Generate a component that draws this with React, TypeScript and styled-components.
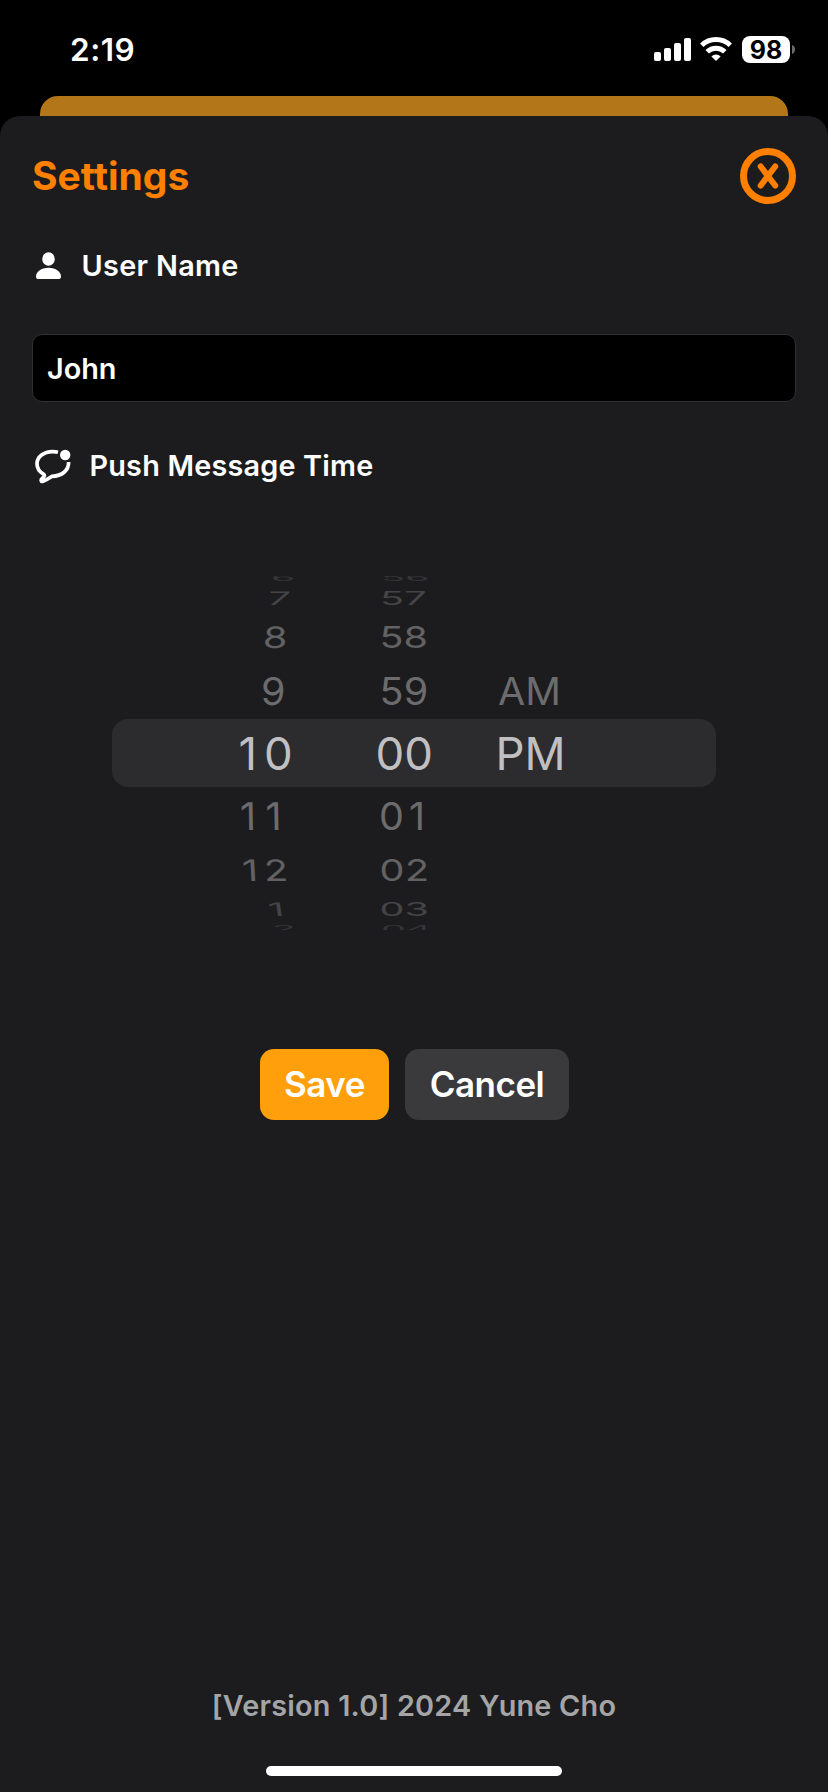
import React from "react";
import styled, { createGlobalStyle } from "styled-components";

const GlobalStyle = createGlobalStyle`
  * { box-sizing: border-box; }
  body { margin: 0; background: #000; font-family: Inter, "Liberation Sans", sans-serif; }
`;

const Screen = styled.div`
  width: 828px;
  height: 1792px;
  display: flex;
  flex-direction: column;
  background: #000;
  overflow: hidden;
`;

const StatusBar = styled.header`
  height: 96px;
  flex: none;
  display: flex;
  justify-content: space-between;
  align-items: flex-start;
  padding: 36px 33px 0 70px;
`;

const Clock = styled.time`
  font-size: 31.5px;
  line-height: 28px;
  font-weight: 600;
  color: #fff;
  letter-spacing: 0.5px;
`;

const StatusIcons = styled.div`
  display: flex;
  align-items: center;
  height: 27px;
`;

const SignalBars = styled.svg`
  width: 37px;
  height: 27px;
`;

const Wifi = styled.svg`
  width: 32px;
  height: 27px;
  margin-left: 9px;
`;

const Battery = styled.div`
  width: 48px;
  height: 27px;
  margin-left: 10px;
  border-radius: 8px;
  background: #fff;
  color: #000;
  font-size: 25px;
  line-height: 28px;
  font-weight: 700;
  text-align: center;
`;

const BatteryTip = styled.svg`
  width: 3px;
  height: 9px;
  margin-left: 2px;
`;

const BackSheet = styled.div`
  height: 20px;
  flex: none;
  margin: 0 40px;
  border-radius: 18px 18px 0 0;
  background: #b37719;
`;

const Sheet = styled.main`
  flex: 1;
  display: flex;
  flex-direction: column;
  border-radius: 20px 20px 0 0;
  background: #1c1c1e;
  padding: 32px 32px 16px;
`;

const TitleRow = styled.div`
  display: flex;
  justify-content: space-between;
  height: 56px;
`;

const Title = styled.h1`
  margin: 0;
  font-size: 39px;
  line-height: 56px;
  font-weight: 700;
  color: #ff8000;
`;

const CloseButton = styled.button`
  width: 56px;
  height: 56px;
  padding: 0;
  border: 0;
  background: none;
`;

const CloseIcon = styled.svg`
  display: block;
  width: 56px;
  height: 56px;
`;

const Label = styled.div<{ $top: number; $gap: number; $tracking: number }>`
  display: flex;
  align-items: center;
  gap: ${(p) => p.$gap}px;
  height: 40px;
  margin-top: ${(p) => p.$top}px;
  padding-left: 3px;
  font-size: 28.8px;
  line-height: 40px;
  font-weight: 600;
  letter-spacing: ${(p) => p.$tracking}px;
  color: #fff;
`;

const NameField = styled.div`
  height: 68px;
  margin-top: 48px;
  padding-left: 14px;
  border: 1px solid #313133;
  border-radius: 10px;
  background: #000;
  color: #fff;
  font-size: 28.8px;
  line-height: 67px;
  font-weight: 600;
`;

const Wheel = styled.div`
  display: grid;
  grid-template-columns: 220px 130px 1fr;
  grid-template-rows: 8px 27px 51px 57px 68px 57px 51px 27px 8px;
  width: 604px;
  margin: 90px auto 0;
`;

const SelectedBand = styled.div`
  grid-area: 5 / 1 / 6 / 4;
  border-radius: 16px;
  background: #2c2c2e;
`;

const Cell = styled.div<{ $row: number; $col: number; $x: number }>`
  grid-area: ${(p) => p.$row} / ${(p) => p.$col};
  display: flex;
  align-items: center;
  padding-left: ${(p) => p.$x}px;
  overflow: ${(p) => (p.$row === 1 || p.$row === 9 ? "hidden" : "visible")};
`;

const Digits = styled.span<{
  $sy: number;
  $size: number;
  $tone: string;
  $skew: number;
  $dy: number;
  $tracking: number;
}>`
  display: block;
  font-size: ${(p) => p.$size}px;
  line-height: 40px;
  letter-spacing: ${(p) => p.$tracking}px;
  color: ${(p) => p.$tone};
  white-space: nowrap;
  transform: translateY(${(p) => p.$dy}px) skewX(${(p) => p.$skew}deg) scaleY(${(p) => p.$sy});
`;

const Actions = styled.div`
  display: flex;
  justify-content: center;
  gap: 16px;
  margin-top: 119px;
  padding-left: 1px;
`;

const ActionButton = styled.button<{ $primary?: boolean }>`
  width: ${(p) => (p.$primary ? 129 : 164)}px;
  height: 71px;
  padding: 0;
  border: 0;
  border-radius: 14px;
  background: ${(p) => (p.$primary ? "#ff9f0c" : "#3a3a3d")};
  color: #fff;
  font-family: inherit;
  font-size: 35px;
  line-height: 71px;
  font-weight: 600;
  letter-spacing: -0.5px;
`;

const Version = styled.footer`
  margin-top: auto;
  margin-bottom: 40px;
  line-height: 40px;
  font-size: 28.8px;
  font-weight: 600;
  letter-spacing: 0.24px;
  text-align: center;
  color: #a5a5a7;
`;

const HomeIndicator = styled.div`
  width: 296px;
  height: 10px;
  flex: none;
  align-self: center;
  border-radius: 5px;
  background: #fff;
`;

// Appearance of a wheel row by its distance from the selected one.
const tiers = [
  { size: 45.5, sy: 1, tone: "#c0c0c3", skew: 0, dy: 0.5 },
  { size: 39.5, sy: 0.965, tone: "#6c6c6e", skew: 1, dy: 0 },
  { size: 39.5, sy: 0.75, tone: "#626264", skew: 3, dy: 0 },
  { size: 39.5, sy: 0.475, tone: "#454547", skew: 8, dy: 0 },
  { size: 39.5, sy: 0.24, tone: "#343436", skew: 10, dy: 2.5 },
];

type Item = [text: string, x: number, tracking?: number];

const hours: Item[] = [
  ["6", 159],
  ["7", 155.5],
  ["8", 151],
  ["9", 149],
  ["10", 126.5, 6.9],
  ["11", 127.5, 9.5],
  ["12", 130, 6],
  ["1", 156],
  ["2", 160],
];
const minutes: Item[] = [
  ["56", 49],
  ["57", 48, 0.3],
  ["58", 47.5],
  ["59", 47.5, 0.3],
  ["00", 43.5],
  ["01", 47, 5],
  ["02", 47.5, 0.5],
  ["03", 47.5],
  ["04", 49],
];
const periods: Item[] = [["", 0], ["", 0], ["", 0], ["AM", 36], ["PM", 33.5]];

function Column({ items, col }: { items: Item[]; col: number }) {
  return (
    <>
      {items.map(([text, x, tracking = 0], i) => {
        const t = tiers[Math.abs(i - 4)];
        if (!text) return null;
        const dy = i === 0 ? -t.dy : t.dy;
        const skew = col === 1 ? (i < 4 ? -t.skew : t.skew) : 0;
        return (
          <Cell key={text} $row={i + 1} $col={col} $x={x}>
            <Digits $sy={t.sy} $size={t.size} $tone={t.tone} $dy={dy} $skew={skew} $tracking={tracking}>
              {text}
            </Digits>
          </Cell>
        );
      })}
    </>
  );
}

export default function App() {
  return (
    <Screen>
      <GlobalStyle />
      <StatusBar>
        <Clock>2:19</Clock>
        <StatusIcons>
          <SignalBars viewBox="0 0 37 27" fill="#fff">
            <rect x="0" y="16" width="7" height="9" rx="2" />
            <rect x="10" y="12" width="7" height="13" rx="2" />
            <rect x="20" y="7" width="7" height="18" rx="2" />
            <rect x="30" y="2" width="7" height="23" rx="2" />
          </SignalBars>
          <Wifi viewBox="0 0 32 27" fill="none" stroke="#fff" strokeWidth="5">
            <path d="M1.7 9.300a20.5 20.5 0 0 1 28.6 0" />
            <path d="M7.200 15.800a12.600 12.600 0 0 1 17.600 0" />
            <path d="M16 25l-4.6-4.6a6.6 6.6 0 0 1 9.2 0z" fill="#fff" stroke="none" />
          </Wifi>
          <Battery>98</Battery>
          <BatteryTip viewBox="0 0 3 9">
            <path d="M0 0c4 1.500 4 7.500 0 9z" fill="#6b6b6b" />
          </BatteryTip>
        </StatusIcons>
      </StatusBar>
      <BackSheet />
      <Sheet>
        <TitleRow>
          <Title>Settings</Title>
          <CloseButton aria-label="Close">
            <CloseIcon viewBox="0 0 56 56" fill="none" stroke="#ff8000">
              <circle cx="28" cy="28" r="24.500" strokeWidth="7" />
              <path d="M20.700 18.500L35.200 37.500M35.200 18.500L20.700 37.500" strokeWidth="6" strokeLinecap="round" />
            </CloseIcon>
          </CloseButton>
        </TitleRow>
        <Label $top={42} $gap={19.5} $tracking={0.35}>
          <svg width="27" height="28" viewBox="0 0 27 28" fill="#fff">
            <ellipse cx="13.500" cy="7" rx="6.300" ry="6.800" />
            <path d="M4 27q-3 0-3-2.600C1 20 6 15.800 13.500 15.800S26 20 26 24.400q0 2.600-3 2.600z" />
          </svg>
          User Name
        </Label>
        <NameField>John</NameField>
        <Label $top={44} $gap={18.5} $tracking={0.2}>
          <svg width="36" height="36" viewBox="0 0 36 36" fill="none">
            <path d="M23 4.200C21.500 3.800 19.500 3.600 17.500 3.600C9 3.600 2 8.700 2 15.800C2 20.300 4.500 23.800 8.500 26.200C9.500 26.900 9.500 27.700 8.900 28.600L6.300 31.600C5.700 33 6.500 33.800 8 33.300C11.500 32 14 30.300 17 28.300C27 28 33.800 22.500 33.600 14" stroke="#fff" strokeWidth="3.700" />
            <circle cx="30.200" cy="7" r="5.200" fill="#fff" />
          </svg>
          Push Message Time
        </Label>
        <Wheel>
          <SelectedBand />
          <Column items={hours} col={1} />
          <Column items={minutes} col={2} />
          <Column items={periods} col={3} />
        </Wheel>
        <Actions>
          <ActionButton $primary>Save</ActionButton>
          <ActionButton>Cancel</ActionButton>
        </Actions>
        <Version>[Version 1.0] 2024 Yune Cho</Version>
        <HomeIndicator />
      </Sheet>
    </Screen>
  );
}
